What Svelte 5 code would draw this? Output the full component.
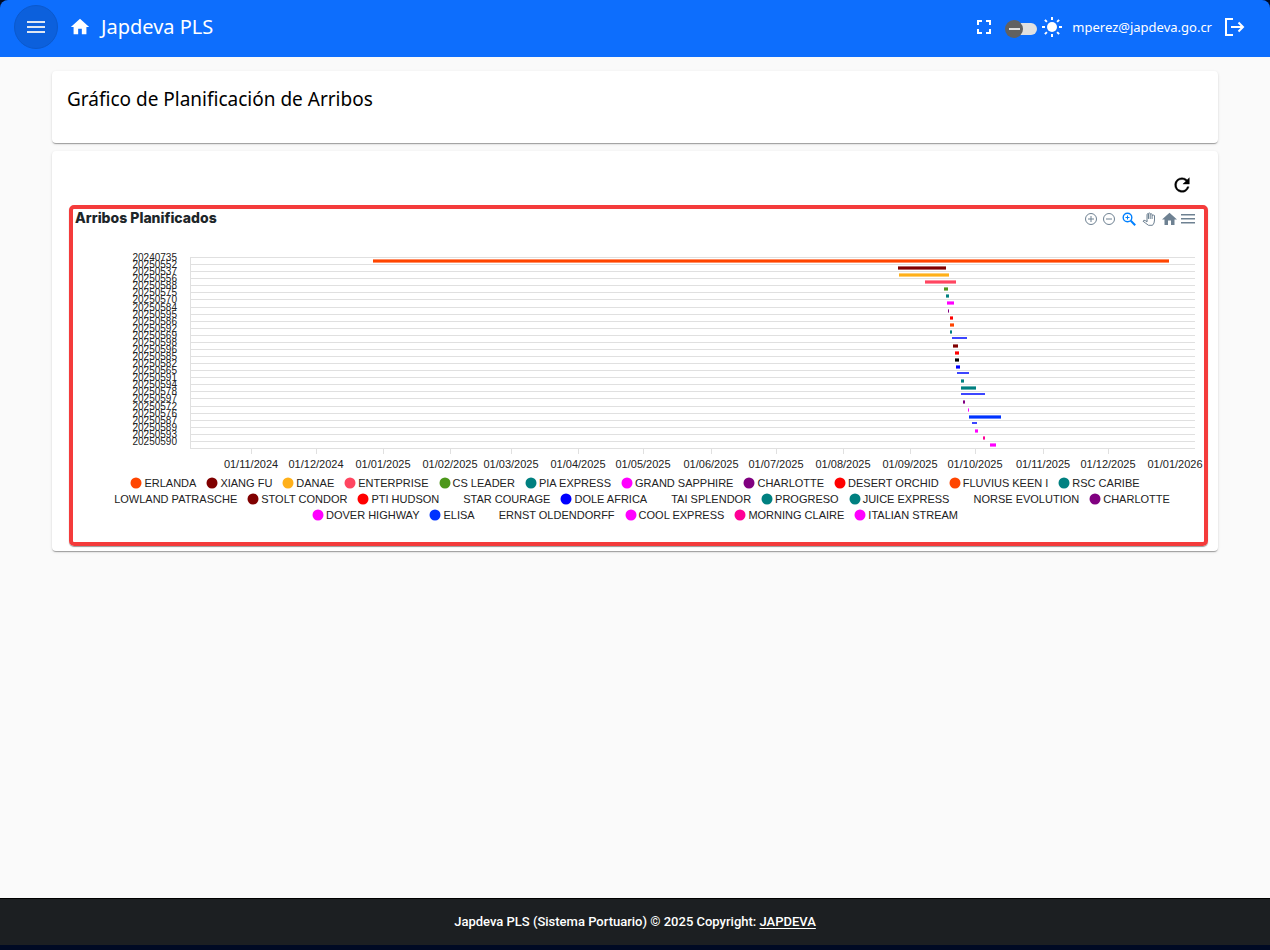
<script>
  const ships = [
    { id: '20240735', name: 'ERLANDA', from: 300, to: 1096, color: '#ff4500' },
    { id: '20250552', name: 'XIANG FU', from: 825, to: 873, color: '#800000' },
    { id: '20250537', name: 'DANAE', from: 826, to: 876, color: '#ffb01a' },
    { id: '20250556', name: 'ENTERPRISE', from: 852, to: 883, color: '#ff4560' },
    { id: '20250588', name: 'CS LEADER', from: 871, to: 875, color: '#4c971a' },
    { id: '20250575', name: 'PIA EXPRESS', from: 873, to: 876, color: '#008080' },
    { id: '20250570', name: 'GRAND SAPPHIRE', from: 874, to: 881, color: '#ff00ff' },
    { id: '20250584', name: 'CHARLOTTE', from: 875, to: 876, color: '#800080' },
    { id: '20250595', name: 'DESERT ORCHID', from: 877, to: 880, color: '#ff0000' },
    { id: '20250586', name: 'FLUVIUS KEEN I', from: 877, to: 881, color: '#ff4500' },
    { id: '20250592', name: 'RSC CARIBE', from: 877, to: 879, color: '#008080' },
    { id: '20250569', name: 'LOWLAND PATRASCHE', from: 879, to: 894, outline: true },
    { id: '20250598', name: 'STOLT CONDOR', from: 880, to: 885, color: '#800000' },
    { id: '20250596', name: 'PTI HUDSON', from: 882, to: 886, color: '#ff0000' },
    { id: '20250585', name: 'STAR COURAGE', from: 882, to: 886, bar: '#000000' },
    { id: '20250582', name: 'DOLE AFRICA', from: 883, to: 887, color: '#0000ff' },
    { id: '20250565', name: 'TAI SPLENDOR', from: 884, to: 896, outline: true },
    { id: '20250591', name: 'PROGRESO', from: 888, to: 891, color: '#008080' },
    { id: '20250594', name: 'JUICE EXPRESS', from: 888, to: 903, color: '#008080' },
    { id: '20250578', name: 'NORSE EVOLUTION', from: 888, to: 912, outline: true },
    { id: '20250597', name: 'CHARLOTTE', from: 890, to: 892, color: '#800080' },
    { id: '20250572', name: 'DOVER HIGHWAY', from: 895, to: 896, color: '#ff00ff' },
    { id: '20250576', name: 'ELISA', from: 896, to: 928, color: '#0033ff' },
    { id: '20250587', name: 'ERNST OLDENDORFF', from: 899, to: 904, outline: true },
    { id: '20250589', name: 'COOL EXPRESS', from: 902, to: 905, color: '#ff00ff' },
    { id: '20250593', name: 'MORNING CLAIRE', from: 910, to: 912, color: '#ff0096' },
    { id: '20250590', name: 'ITALIAN STREAM', from: 917, to: 923, color: '#ff00ff' }
  ];

  const months = [
    ['01/11/2024', 178], ['01/12/2024', 243], ['01/01/2025', 310], ['01/02/2025', 377],
    ['01/03/2025', 438], ['01/04/2025', 505], ['01/05/2025', 570], ['01/06/2025', 638],
    ['01/07/2025', 703], ['01/08/2025', 770], ['01/09/2025', 837], ['01/10/2025', 902],
    ['01/11/2025', 970], ['01/12/2025', 1035], ['01/01/2026', 1102]
  ];

  const plotTop = 27;
  const plotBottom = 218;
  const rowStep = (plotBottom - plotTop) / ships.length;
  const rowY = (i) => Math.round(plotTop + i * rowStep);
</script>

<div class="app">
  <header>
    <button class="menu" aria-label="Menú">
      <svg width="24" height="24" viewBox="0 0 24 24" fill="#dfe6f2"><path d="M3 6h18v2H3zM3 11h18v2H3zM3 16h18v2H3z" /></svg>
    </button>
    <a class="brand" href="#inicio">
      <svg width="22" height="22" viewBox="0 0 24 24" fill="#fff"><path d="M10 20v-6h4v6h5v-8h3L12 3 2 12h3v8z" /></svg>
      <span>Japdeva PLS</span>
    </a>
    <div class="actions">
      <button class="plain full" aria-label="Pantalla completa">
        <svg width="24" height="24" viewBox="0 0 24 24" fill="#fff"><path d="M7 14H5v5h5v-2H7zM5 10h2V7h3V5H5zM17 17h-3v2h5v-5h-2zM14 5v2h3v3h2V5z" /></svg>
      </button>
      <label class="toggle">
        <input type="checkbox" role="switch" aria-label="Tema oscuro" />
        <svg width="24" height="24" viewBox="0 0 24 24" fill="#fff">
          <circle cx="12" cy="12" r="5" />
          <path d="M11 2h2v3h-2zM11 19h2v3h-2zM2 11h3v2H2zM19 11h3v2h-3zM4.200 5.600l1.400-1.400 2 2-1.400 1.400zM16.400 17.800l1.400-1.400 2 2-1.400 1.400zM4.200 18.400l2-2 1.400 1.400-2 2zM16.400 6.200l2-2 1.400 1.400-2 2z" />
        </svg>
      </label>
      <span class="mail">mperez@japdeva.go.cr</span>
      <button class="plain" aria-label="Salir">
        <svg width="22" height="20" viewBox="0 0 22 20" fill="none" stroke="#fff" stroke-width="2"><path d="M9 2H2v16h7M7 10h12M14.500 5.500 19 10l-4.500 4.500" /></svg>
      </button>
    </div>
  </header>

  <main>
    <section class="card heading"><h1>Gráfico de Planificación de Arribos</h1></section>

    <section class="card content">
      <div class="refresh">
        <button class="plain" aria-label="Actualizar">
          <svg width="22" height="22" viewBox="0 0 24 24" fill="#000" stroke="#000" stroke-width="0.400"><path d="M17.650 6.350A7.960 7.960 0 0 0 12 4a8 8 0 1 0 7.730 10h-2.080A6 6 0 1 1 12 6c1.660 0 3.140.690 4.220 1.780L13 11h7V4z" /></svg>
        </button>
      </div>

      <div class="frame">
        <div class="bar">
          <h2>Arribos Planificados</h2>
          <div class="tools">
            <button class="plain" aria-label="Acercar">
              <svg width="14" height="14" viewBox="0 0 14 14" fill="none" stroke="#6e8192"><circle cx="7" cy="7" r="5.500" /><path d="M4 7h6M7 4v6" /></svg>
            </button>
            <button class="plain" aria-label="Alejar">
              <svg width="14" height="14" viewBox="0 0 14 14" fill="none" stroke="#6e8192"><circle cx="7" cy="7" r="5.500" /><path d="M4 7h6" /></svg>
            </button>
            <button class="plain zoom" aria-label="Selección de zoom">
              <svg width="14" height="14" viewBox="0 0 14 14" fill="none" stroke="#0080ff"><circle cx="5.500" cy="5.500" r="4.300" stroke-width="1.400" /><path d="M3.500 5.500h4M5.500 3.500v4" /><path d="m8.800 8.800 4.400 4.400" stroke-width="2" /></svg>
            </button>
            <button class="plain pan" aria-label="Desplazar">
              <svg width="14" height="14" viewBox="0 0 14 14" fill="none" stroke="#6e8192"><path d="M5 8.500V2.200q.7-.9 1.400 0V7M6.400 6V1.400q.9-.9 1.800 0V7M8.200 2.200q1-.9 1.900 0V7M10.100 3.500q1.200-.9 2.400 0V8q0 3.400-2 5.300H6.500Q4 11.500 1 9.200q.6-1.500 2.200-.7L5 10V8" /></svg>
            </button>
            <button class="plain house" aria-label="Restablecer zoom">
              <svg width="15" height="14" viewBox="0 0 15 14" fill="#6e8192"><path d="M6 13V8.500h3V13h3.500V7.500H15L7.500.800 0 7.500h2.500V13z" /></svg>
            </button>
            <button class="plain" aria-label="Menú del gráfico">
              <svg width="14" height="14" viewBox="0 0 14 14" fill="#6e8192"><path d="M0 2h14v1.500H0zM0 6h14v1.500H0zM0 10h14v1.500H0z" /></svg>
            </button>
          </div>
        </div>

        <svg class="chart" viewBox="0 0 1131 243" role="img" aria-label="Arribos Planificados">
          <g stroke="#e0e0e0">
            {#each ships as ship, i (ship.id)}
              <line x1="117" x2="1122" y1={rowY(i) + 0.5} y2={rowY(i) + 0.5} />
            {/each}
            <line x1="117" x2="1122" y1={plotBottom + 0.5} y2={plotBottom + 0.5} />
            <line x1="117.500" x2="117.500" y1={plotTop} y2={plotBottom} />
            {#each months as [label, x] (label)}
              {#if x < 1100}
                <line x1={x + 0.5} x2={x + 0.5} y1={plotBottom} y2={plotBottom + 6} />
              {/if}
            {/each}
          </g>
          {#each ships as ship, i (ship.id)}
            <text class="row" x="104" y={rowY(i) + 4}>{ship.id}</text>
            {#if ship.outline}
              <rect x={ship.from} y={rowY(i) + 2} width={ship.to - ship.from} height="2" fill="#3c46ff" />
            {:else}
              <rect x={ship.from} y={rowY(i) + 2} width={ship.to - ship.from} height="4" fill={ship.color ?? ship.bar} opacity="0.600" />
              <rect x={ship.from} y={rowY(i) + 3} width={ship.to - ship.from} height="2" fill={ship.color ?? ship.bar} />
            {/if}
          {/each}
          {#each months as [label, x] (label)}
            <text class="month" {x} y="238">{label}</text>
          {/each}
        </svg>

        <ul class="legend">
          {#each ships as ship (ship.id)}
            <li>
              <svg width="12" height="12" viewBox="0 0 12 12"><circle cx="6" cy="6" r="5.500" fill={ship.color ?? 'none'} /></svg>
              <span>{ship.name}</span>
            </li>
          {/each}
        </ul>
      </div>
    </section>
  </main>

  <footer>
    <p>Japdeva PLS (Sistema Portuario) © 2025 Copyright: <a href="#japdeva">JAPDEVA</a></p>
  </footer>
</div>

<style>
  :global(body) {
    background: #000a24;
  }
  .app {
    box-sizing: border-box;
    min-height: 100vh;
    display: flex;
    flex-direction: column;
    border-bottom: 5px solid #000a24;
    font-family: Roboto, sans-serif;
  }
  header {
    height: 57px;
    box-sizing: border-box;
    padding: 0 24px 4px 14px;
    display: flex;
    align-items: center;
    background: #0d6efd;
    color: #fff;
    border-radius: 8px 8px 0 0;
  }
  button {
    display: flex;
    align-items: center;
    justify-content: center;
    padding: 0;
    border: 0;
    cursor: pointer;
  }
  .plain {
    background: none;
  }
  .menu {
    width: 44px;
    height: 44px;
    border-radius: 50%;
    background: #0c60dc;
    border: 1px solid #0b59cc;
  }
  .brand {
    display: flex;
    align-items: center;
    gap: 10px;
    margin-left: 11px;
    color: #fff;
    text-decoration: none;
    font: 20px/24px "Noto Sans", sans-serif;
  }
  .actions {
    display: flex;
    align-items: center;
    margin-left: auto;
  }
  .full {
    margin-right: 9px;
  }
  .toggle {
    display: flex;
    align-items: center;
    gap: 3px;
  }
  .toggle input {
    appearance: none;
    position: relative;
    width: 32px;
    height: 18px;
    margin: 4px 0 0;
  }
  .toggle input::before {
    content: "";
    position: absolute;
    inset: 3px 0 3px 10px;
    border-radius: 6px;
    background: #e0e0e0;
  }
  .toggle input::after {
    content: "";
    position: absolute;
    left: 0;
    top: 0;
    width: 18px;
    height: 18px;
    border-radius: 50%;
    background: linear-gradient(#e0e0e0, #e0e0e0) center / 11px 2px no-repeat #616161;
  }
  .mail {
    margin: 0 12px 0 8px;
    font: 13px/16px "Noto Sans", sans-serif;
  }
  main {
    flex: 1;
    display: flex;
    flex-direction: column;
    gap: 8px;
    padding: 14px 52px;
    background: #fafafa;
  }
  .card {
    background: #fff;
    border-radius: 4px;
    box-shadow: 0 2px 1px -1px rgba(0, 0, 0, 0.2), 0 1px 1px rgba(0, 0, 0, 0.14), 0 1px 3px rgba(0, 0, 0, 0.12);
  }
  .heading {
    padding: 16px 15px 32px;
  }
  h1 {
    margin: 0;
    font: 19px/24px "Noto Sans", sans-serif;
  }
  .content {
    padding: 16px 10px 5px 17px;
  }
  .refresh {
    display: flex;
    justify-content: flex-end;
    padding: 7px 15px 9px;
  }
  .frame {
    border: 4px solid #f43b3b;
    border-radius: 5px;
    padding-bottom: 19px;
    box-shadow: 0 1px 1px rgba(0, 0, 0, 0.4);
  }
  .bar {
    display: flex;
    justify-content: space-between;
    align-items: flex-start;
    height: 21px;
    padding: 0 9px 0 2px;
  }
  h2 {
    margin: 0;
    font: 800 14px/18px Inter, sans-serif;
    color: #1d2629;
  }
  .tools {
    display: flex;
    align-items: center;
    gap: 4px;
    padding-top: 3px;
  }
  .zoom {
    margin-left: 2px;
  }
  .pan,
  .house {
    margin-left: 2px;
  }
  .chart {
    display: block;
    width: 100%;
    font-family: "Liberation Sans", Arial, sans-serif;
    fill: #222;
  }
  .row {
    font-size: 10px;
    text-anchor: end;
  }
  .month {
    font-size: 11px;
    text-anchor: middle;
  }
  .legend {
    display: flex;
    flex-wrap: wrap;
    justify-content: center;
    column-gap: 10px;
    margin: 2px 0 0;
    padding: 0 7px 0 0;
    list-style: none;
    font: 11px/16px "Liberation Sans", Arial, sans-serif;
    color: #222;
  }
  .legend li {
    display: flex;
    align-items: center;
    gap: 2px;
  }
  footer {
    height: 47px;
    box-sizing: border-box;
    display: flex;
    align-items: center;
    justify-content: center;
    padding-bottom: 2px;
    border-top: 1px solid #000;
    background: #1c1f22;
    color: #fff;
    font: 500 13px Roboto, sans-serif;
  }
  footer p {
    margin: 0;
  }
  footer a {
    color: #fff;
    text-underline-offset: 2px;
  }
</style>
